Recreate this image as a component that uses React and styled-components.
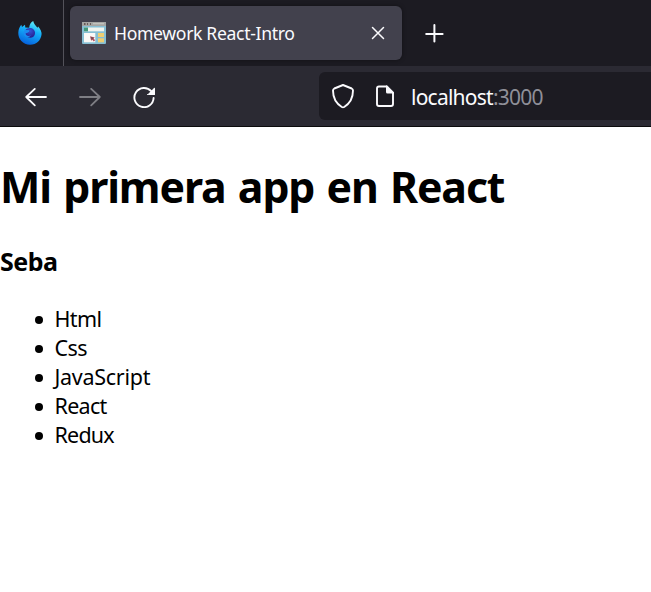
import React from "react";
import styled, { createGlobalStyle } from "styled-components";

const Global = createGlobalStyle`
  * { box-sizing: border-box; }
  body { margin: 0; background: #fff; overflow: hidden; font-family: "Segoe UI", "Noto Sans", "Open Sans", sans-serif; }
`;

const Window = styled.div`
  height: 592px;
  display: flex;
  flex-direction: column;
`;

const TabBar = styled.header`
  height: 66px;
  flex: none;
  display: flex;
  background: #1c1b22;
`;

const BrowserMark = styled.div`
  width: 64px;
  padding: 20px 0 0 17px;
  border-right: 1px solid #53525a;
  svg { display: block; }
`;

const Tab = styled.div`
  width: 332px;
  height: 54px;
  margin: 6px 0 0 6px;
  padding: 0 16px 0 12px;
  display: flex;
  align-items: center;
  border-radius: 6px;
  background: #42414d;
  box-shadow: 0 0 4px rgba(0, 0, 0, 0.4);
  svg { display: block; flex: none; }
`;

const TabTitle = styled.span`
  flex: 1;
  margin-left: 8px;
  color: #fbfbfe;
  font-size: 17.6px;
  line-height: 24px;
  letter-spacing: -0.34px;
  white-space: nowrap;
`;

const NewTab = styled.button`
  width: 64px;
  height: 66px;
  padding: 0;
  border: 0;
  background: none;
  display: grid;
  place-items: center;
`;

const NavBar = styled.nav`
  height: 61px;
  flex: none;
  display: flex;
  align-items: center;
  background: #2b2a33;
  border-bottom: 1px solid #0c0c0d;
`;

const NavButton = styled.button`
  width: 54px;
  height: 48px;
  padding: 0;
  border: 0;
  background: none;
  display: grid;
  place-items: center;
  opacity: ${(p) => (p.$dim ? 0.4 : 1)};
  &:first-child { margin-left: 9px; }
`;

const UrlBar = styled.div`
  flex: 1;
  height: 48px;
  margin-left: 148px;
  padding-left: 12px;
  display: flex;
  align-items: center;
  border-radius: 6px 0 0 6px;
  background: #1c1b22;
  svg { display: block; flex: none; }
`;

const Address = styled.span`
  margin: 2px 0 0 16px;
  color: #fbfbfe;
  font-size: 21px;
  line-height: 28px;
  letter-spacing: -0.76px;
  white-space: nowrap;
`;

const Port = styled.span`
  color: #8f8f98;
`;

const Page = styled.main`
  flex: 1;
  color: #000;
`;

const Title = styled.h1`
  margin: 31px 0 0;
  font-size: 42.8px;
  line-height: 58px;
  letter-spacing: -1.1px;
  word-spacing: 2.2px;
  white-space: nowrap;
`;

const Name = styled.h3`
  margin: 27px 0 0;
  font-size: 25px;
  line-height: 36px;
  letter-spacing: -0.5px;
`;

const List = styled.ul`
  margin: 25px 0 0;
  padding: 0 0 0 54px;
  list-style: none;
`;

const Item = styled.li`
  display: flex;
  align-items: center;
  font-size: 21.5px;
  line-height: 29px;
  letter-spacing: ${(p) => p.$tracking};
  &::before {
    content: "";
    width: 8px;
    height: 8px;
    margin: 2px 11.5px 0 -19px;
    border-radius: 50%;
    background: #000;
  }
`;

const skills = [
  ["Html", "-0.6px"],
  ["Css", "-0.6px"],
  ["JavaScript", "-0.28px"],
  ["React", "-0.7px"],
  ["Redux", "-0.8px"],
];

const FirefoxIcon = () => (
  <svg width="26" height="26" viewBox="0 0 26 26">
    <defs>
      <linearGradient id="flame" x1="0.75" y1="0" x2="0.35" y2="1">
        <stop offset="0" stopColor="#6df2f5" />
        <stop offset="0.4" stopColor="#16b3fb" />
        <stop offset="1" stopColor="#0560dc" />
      </linearGradient>
      <radialGradient id="globe" cx="0.5" cy="0.3" r="0.7">
        <stop offset="0" stopColor="#3255d5" />
        <stop offset="1" stopColor="#271d8c" />
      </radialGradient>
    </defs>
    <path d="M1.3 12.5C1.5 9 2.8 6.5 4.3 4.7L5 7L8 4.8L8.3 7.4L12.2 7.8C12.4 4.6 14 2 16.2 1C16.7 4.3 19 5.4 20.4 7.8L21.2 6.5C23.5 9.3 24.8 12 24.6 14C24.1 20.4 19.3 24.8 13 24.7C6 24.5 1 19.3 1.3 12.5Z" fill="url(#flame)" />
    <path d="M8.3 10.3C9.8 7.8 14 7 16.6 9.4C19.5 12.1 17.8 17.7 13.2 17.7C10.2 17.7 8 15.8 8 13.1L11.6 12.1L12.3 10.5Z" fill="url(#globe)" />
    <path d="M7.8 9.8L12.2 10.4L11.2 12.3L8.6 13.6C8.8 16 11.8 16.6 14 15.3C11 19 6.3 16.5 6.6 12.4Z" fill="#1b8cf1" />
  </svg>
);

const PageLayoutIcon = () => (
  <svg width="24" height="22" viewBox="0 0 24 22">
    <rect width="24" height="22" rx="1" fill="#86bfd4" />
    <rect width="24" height="4" rx="0.5" fill="#a5a5a3" />
    <path d="M2 1h1.5v2H2zM5 1h1v2H5zM8 1h1v2H8z" fill="#685c59" />
    <rect x="11" y="1" width="11" height="1.3" fill="#c2c2bd" />
    <rect x="2" y="5.5" width="20" height="3.8" fill="#f2f4ee" />
    <rect x="2" y="5.5" width="4" height="3.8" fill="#439879" />
    <rect x="2" y="11" width="11.3" height="9.3" fill="#faf8f6" />
    <rect x="16" y="11" width="6" height="4" fill="#efce72" />
    <rect x="16" y="16.3" width="6" height="4" fill="#efce72" />
    <path d="M8 14.3l4.8 1.2-1.2 1 1.5 1.7-1.3 1.2-1.5-1.6-1.2 1z" fill="#b55260" />
    <path d="M8.8 15l3 .8-2 2z" fill="#6c4b51" />
  </svg>
);

const CloseIcon = () => (
  <svg width="16" height="16" viewBox="0 0 16 16" fill="none" stroke="#fbfbfe" strokeWidth="1.5" strokeLinecap="round">
    <path d="M2.5 2.5L13.5 13.5M13.5 2.5L2.5 13.5" />
  </svg>
);

const PlusIcon = () => (
  <svg width="20" height="20" viewBox="0 0 20 20" fill="none" stroke="#fbfbfe" strokeWidth="2" strokeLinecap="round">
    <path d="M10.4 2V18.4M2.2 11H18.6" />
  </svg>
);

const BackIcon = () => (
  <svg width="24" height="24" viewBox="0 0 24 24" fill="none" stroke="#fbfbfe" strokeWidth="1.8" strokeLinecap="round" strokeLinejoin="round">
    <path d="M22 13H2.2M10.8 4.9L2.2 13L10.8 21.3" />
  </svg>
);

const ForwardIcon = () => (
  <svg width="24" height="24" viewBox="0 0 24 24" fill="none" stroke="#fbfbfe" strokeWidth="1.8" strokeLinecap="round" strokeLinejoin="round">
    <path d="M2 13H21.8M13.2 4.9L21.8 13L13.2 21.3" />
  </svg>
);

const ReloadIcon = () => (
  <svg width="24" height="24" viewBox="0 0 24 24">
    <path d="M19.2 7.2A9.6 9.6 0 1 0 21.6 14" fill="none" stroke="#fbfbfe" strokeWidth="1.9" strokeLinecap="round" />
    <path d="M22 4.1C22.5 3.6 23 3.9 23 4.6V10.5Q23 11 22.5 11H16.5C15.8 11 15.5 10.6 16 10.1Z" fill="#fbfbfe" />
  </svg>
);

const ShieldIcon = () => (
  <svg width="24" height="26" viewBox="0 0 24 26" fill="none" stroke="#fbfbfe" strokeWidth="1.9" strokeLinejoin="round">
    <path d="M12 2L20.7 5.5Q22 6.1 22 7.6C22 15.5 18.6 20.7 13.2 24Q12 24.7 10.8 24C5.4 20.7 2 15.5 2 7.6Q2 6.1 3.3 5.5Z" />
  </svg>
);

const DocumentIcon = () => (
  <svg width="20" height="24" viewBox="0 0 20 24">
    <path d="M12 2.5H4Q2 2.5 2 4.5V20Q2 22 4 22H16Q18 22 18 20V9" fill="none" stroke="#fbfbfe" strokeWidth="1.9" />
    <path d="M11 1.5H12.3L19 8.2V9.5H12.5Q11 9.5 11 8Z" fill="#fbfbfe" />
  </svg>
);

const DocumentSlot = styled.span`
  margin-left: 20px;
`;

export default function App() {
  return (
    <Window>
      <Global />
      <TabBar>
        <BrowserMark><FirefoxIcon /></BrowserMark>
        <Tab>
          <PageLayoutIcon />
          <TabTitle>Homework React-Intro</TabTitle>
          <CloseIcon />
        </Tab>
        <NewTab aria-label="New tab"><PlusIcon /></NewTab>
      </TabBar>
      <NavBar>
        <NavButton aria-label="Back"><BackIcon /></NavButton>
        <NavButton aria-label="Forward" $dim><ForwardIcon /></NavButton>
        <NavButton aria-label="Reload"><ReloadIcon /></NavButton>
        <UrlBar>
          <ShieldIcon />
          <DocumentSlot><DocumentIcon /></DocumentSlot>
          <Address>localhost<Port>:3000</Port></Address>
        </UrlBar>
      </NavBar>
      <Page>
        <Title>Mi primera app en React</Title>
        <Name>Seba</Name>
        <List>
          {skills.map(([label, tracking]) => (
            <Item key={label} $tracking={tracking}>{label}</Item>
          ))}
        </List>
      </Page>
    </Window>
  );
}
